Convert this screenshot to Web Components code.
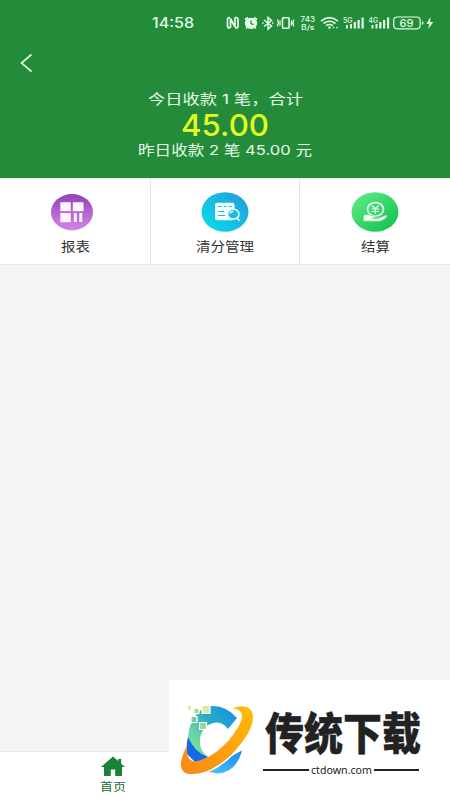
<!DOCTYPE html>
<html lang="zh-CN"><head><meta charset="utf-8"><title>首页</title>
<style>html,body{margin:0;height:800px;overflow:hidden;background:#f4f4f4;font-family:"Inter","Noto Sans CJK SC",sans-serif}</style></head>
<body><payment-app></payment-app>
<script>
const define=(name,html)=>customElements.define(name,class extends HTMLElement{
  constructor(){super();this.attachShadow({mode:'open'}).innerHTML=html;}
});
/* One line of text fitted to a given width: w, h, size, base (baseline). */
customElements.define('fit-text',class extends HTMLElement{
  connectedCallback(){
    if(this.shadowRoot)return;
    const a=n=>this.getAttribute(n);
    this.attachShadow({mode:'open'}).innerHTML=`<style>:host{display:block;line-height:0;flex:none}svg{display:block;overflow:visible}text{white-space:pre}</style>
    <svg width="${a('w')}" height="${a('h')}"><text x="0" y="${a('base')}" font-size="${a('size')}" fill="currentColor" textLength="${a('w')}" lengthAdjust="spacingAndGlyphs"></text></svg>`;
    this.shadowRoot.querySelector('text').textContent=a('text');
  }
});
define('status-bar',`<style>:host{display:flex;height:46px;box-sizing:border-box;padding:15px 0 0 152px;color:#e0ffe4}
svg{display:block;flex:none}fit-text{margin-right:31px;font-weight:500}</style>
<fit-text w="42" h="16" size="14" base="12.500" text="14:58"></fit-text>
<svg width="225" height="18" viewBox="225 15 225 18" fill="none" stroke="currentColor" stroke-width="1.300" font-family="Inter" font-weight="500">
<path d="M230 17.500h-.5q-2 0-2 2v6.500q0 2 2 2h.5M235 17.500h1q2 0 2 2v6.500q0 2-2 2h-1M230.500 28v-9.500l4.500 8.500v-9.500" stroke-width="1.700"/>
<ellipse cx="251" cy="23.300" rx="5.600" ry="5" fill="currentColor"/><path d="M245 19.500l3-2M254 17.500l3 2M247.500 27l-1.500 1.500M254.500 27l1.500 1.500" stroke-width="1.600"/><path d="M251 20.500v3l2.500 1.200" stroke="#248b3b"/>
<path d="M264 20l7.500 6-3.500 3v-11.500l3.500 3-7.500 6M262.300 23h1.400M272 23h1.400" stroke-width="1.500"/>
<rect x="282.500" y="17.700" width="6.600" height="10.600" rx="1" stroke-width="1.600"/><path d="M280 20.500v5M277.800 19.500v2l.8 1.500-.8 1.500v2M291.500 20.500v5M293.500 19.500v2l-.8 1.500.8 1.500v2"/>
<path d="M321 21.200q8.500-7 17 0M323.500 23.500q6-4.500 12 0M326 25.700q3.500-2.400 7 0" stroke-width="1.600"/><g fill="currentColor" stroke="none"><circle cx="329.500" cy="27.600" r="1.300"/><circle cx="333.500" cy="27.600" r=".8"/><circle cx="337" cy="27.600" r=".8"/>
<path d="M346 25h2v3.500h-2zM350 24h2v4.500h-2zM353.700 22h2.200v6.500h-2.200zM357.500 20h2.200v8.500h-2.200zM361.500 17.500h2.200v11h-2.200zM371.500 25h2v3.500h-2zM375.500 24h2v4.500h-2zM379.200 22h2.200v6.500h-2.200zM383 20h2.200v8.500H383zM387 17.500h2.200v11H387z"/>
<text x="300.500" y="21.500" font-size="7.200" textLength="14.500" lengthAdjust="spacingAndGlyphs">743</text><text x="301" y="30.300" font-size="7.200" textLength="13.500" lengthAdjust="spacingAndGlyphs">B/s</text>
<text x="343" y="22.500" font-size="7" textLength="9.500" lengthAdjust="spacingAndGlyphs">5G</text><text x="368.500" y="22.500" font-size="7" textLength="9.500" lengthAdjust="spacingAndGlyphs">4G</text><text x="399.500" y="26.800" font-size="10.500" textLength="14" lengthAdjust="spacingAndGlyphs">69</text>
<path d="M422 21.300q1.500 0 1.500 1.700t-1.500 1.700zM430.500 17l-4.200 7h3l-1 5 5-7h-3.200z"/></g><rect x="393.700" y="17" width="26.500" height="11.800" rx="3.500" stroke-width="1.200"/></svg>`);
define('summary-header',`<style>:host{display:block;height:178px;background:#248b3b;color:#e5fbe7}
.back{display:flex;padding:7px 0 0 19px;height:37px}.sum{display:flex;flex-direction:column;align-items:center}.big{color:#e3ff20;margin-top:2px;font-weight:500}</style>
<status-bar></status-bar><div class="back"><svg width="16" height="20" viewBox="0 0 16 20" fill="none" stroke="#d4ffdc" stroke-width="1.700"><path d="M12.500 1.500 2.500 10l10 8.500"/></svg></div>
<div class="sum"><fit-text w="155" h="18" size="13.700" base="13.500" text="今日收款 1 笔，合计"></fit-text>
<fit-text class="big" w="88" h="31" size="30" base="25.500" text="45.00"></fit-text>
<fit-text w="174" h="18" size="13.700" base="14" text="昨日收款 2 笔 45.00 元"></fit-text></div>`);
define('menu-tile',`<style>:host{display:flex;flex-direction:column;align-items:center;box-sizing:border-box;height:85px;padding-top:12px;background:#fff;color:#333}
.icon{height:45px;display:flex}</style><div class="icon"><slot name="icon"></slot></div><slot></slot>`);
define('menu-row',`<style>:host{display:grid;grid-template-columns:150px 148px 150px;gap:1px;padding:1px 0;background:#e6e6e6}svg{display:block}.report{margin-right:6px}</style>
<menu-tile><svg slot="icon" class="report" width="44" height="42" viewBox="50 191 44 42"><defs><linearGradient id="p" x2="0" y2="1"><stop stop-color="#9142b5"/><stop offset="1" stop-color="#d685e8"/></linearGradient></defs><ellipse cx="72" cy="212.200" rx="21" ry="18.200" fill="url(#p)"/><path fill="#fff3ff" d="M60.300 202.300h10.500v8.900H60.300zM72.800 202.300h10.700v8.900H72.800zM60.300 213h10.500v9.200H60.300zM73.800 213h3v9h-3zM79.300 213h3v9h-3z"/></svg><fit-text w="29" h="18" size="12.800" base="14.500" text="报表"></fit-text></menu-tile>
<menu-tile><svg slot="icon" width="50" height="42" viewBox="200 191 50 42"><defs><linearGradient id="b" x1="0" y1="1" x2="1" y2="0"><stop stop-color="#07e0ee"/><stop offset="1" stop-color="#2699d7"/></linearGradient></defs><ellipse cx="225" cy="212" rx="23.500" ry="19.700" fill="url(#b)"/><rect x="215" y="202.700" width="19.500" height="17.500" rx="2" fill="#edffff"/><path d="M218 206.500h3.500m2 0h3m2 0h3.500M218 211.500h6M218 215.500h7" stroke="#29b9d6" stroke-width="1.200"/><ellipse cx="233.300" cy="214.200" rx="5.700" ry="5" fill="#25b7dd" stroke="#d7faff" stroke-width="1.700"/><path d="M230 213.500q1-2.300 3.300-2.300M237 218l2.500 3" fill="none" stroke="#d7faff" stroke-width="1.600"/></svg><fit-text w="58" h="18" size="12.800" base="14.500" text="清分管理"></fit-text></menu-tile>
<menu-tile><svg slot="icon" width="50" height="42" viewBox="350 191 50 42"><defs><linearGradient id="g" x2="1" y2="1"><stop stop-color="#65ed8b"/><stop offset="1" stop-color="#09c04a"/></linearGradient></defs><ellipse cx="375" cy="212" rx="23.500" ry="19.700" fill="url(#g)"/><g fill="none" stroke="#edfff0" stroke-width="1.700"><ellipse cx="375.500" cy="209.300" rx="8" ry="6.800"/><path d="M372 205.500l3.300 3.200 3.500-3.200M375.300 208.500v5.500M371.500 209h7.500M371.500 211.500h7.500" stroke-width="1.200"/></g><path stroke="#32cf67" stroke-width=".6" fill="#edfff0" d="M363.200 215.200q4.300-1.700 8 .1l6 1.200q1.500 1.500-4.500 1.500 5.500 1 8.500-1l4.500-2q2.500-.4 1.200 2-4.700 5-10 4.600-7.500-.6-13.700-.3z"/></svg><fit-text w="29" h="18" size="12.800" base="14.500" text="结算"></fit-text></menu-tile>`);
define('tab-bar',`<style>:host{display:flex;height:49px;background:#fff;border-top:1px solid #e8e8e8;box-sizing:border-box}.tab{width:225px;display:flex;flex-direction:column;align-items:center;padding-top:4px;color:#256d39}svg{display:block}</style>
<div class="tab"><svg width="24" height="22" viewBox="0 0 24 22"><path d="M12 .5 0 11h3v9h6.800v-6.500h4.400V20H21v-9h3l-3.800-3.300V3h-3v2z" fill="#198438"/></svg><fit-text w="26" h="17" size="11.300" base="13" text="首页"></fit-text></div>`);
define('site-badge',`<style>:host{display:flex;box-sizing:border-box;width:281px;height:120px;background:#fff;color:#222;padding:20px 0 0 9px}svg.logo{display:block;flex:none}.words{display:flex;flex-direction:column;padding:8px 0 0 3px}.title{font-family:"Noto Sans CJK SC",sans-serif;font-weight:900;margin-left:2px;stroke:#222;stroke-width:.4px}.site{display:flex;align-items:center;gap:2px;margin-top:2px;width:156px;font-family:"Noto Sans",sans-serif}.line{height:2px;flex:1;background:#222}</style>
<svg class="logo" width="82" height="80" viewBox="178 700 82 80"><defs><linearGradient id="c" x1="0" y1="1" x2="1" y2="0"><stop stop-color="#8cf08c"/><stop offset=".35" stop-color="#66cfaa"/><stop offset=".6" stop-color="#25abc8"/><stop offset="1" stop-color="#168fe8"/></linearGradient><linearGradient id="o" x1="0" y1="1" x2="1" y2="0"><stop stop-color="#fa8616"/><stop offset="1" stop-color="#ffbd06"/></linearGradient><linearGradient id="u" x1="0" y1="1" x2="1" y2="0"><stop stop-color="#4cc4ff"/><stop offset="1" stop-color="#188af0"/></linearGradient></defs>
<path d="M205 707.500Q222 702 237 718L228 729Q223 722 216 722.500C204 724 199 734 200 744Q201 752 208 757L196 762Q187 751 188 739C188 727 194 713 205 707.500z" fill="url(#c)"/><path d="M188 737Q195 753 208 757L196 763 187 754Q186 744 188 737z" fill="#1768ea"/>
<path d="M232.500 708.500C243 704 252.500 706 253 717 253 727 246 739 232 754 219 767 203 775 190 774 178 773 179 761 187 745.500 186 756 189 761 195 761.500 207 760 219 751 229 740 238 729 243 720 242 715 241 710 237 709 232.500 708.500z" fill="url(#o)"/>
<path d="M242 750.500Q236 773 217 773.500L209 771.800Q221 767 232 756z" fill="url(#u)"/>
<g stroke="#fff" stroke-width="1.200"><path d="M202 705.500h8v8h-8z" fill="#d4ec9c"/><path d="M194 708.500h5v5h-5z" fill="#a5dc82"/><path d="M191 716.500h6v6h-6z" fill="#79c998"/><path d="M199.500 722.500h7v7h-7z" fill="#98d990"/></g><path d="M188 706h3v3.500h-3z" fill="#d4eca8"/></svg>
<div class="words"><fit-text class="title" w="156" h="52" size="44.500" base="41.500" text="传统下载"></fit-text><div class="site"><span class="line"></span><fit-text w="61" h="16" size="11" base="11.500" text="ctdown.com"></fit-text><span class="line"></span></div></div>`);
define('payment-app',`<style>:host{display:flex;flex-direction:column;position:relative;width:450px;height:800px;background:#f4f4f4}main{flex:1}site-badge{position:absolute;right:0;bottom:0}</style>
<summary-header></summary-header><menu-row></menu-row><main></main><tab-bar></tab-bar><site-badge></site-badge>`);
</script></body></html>
